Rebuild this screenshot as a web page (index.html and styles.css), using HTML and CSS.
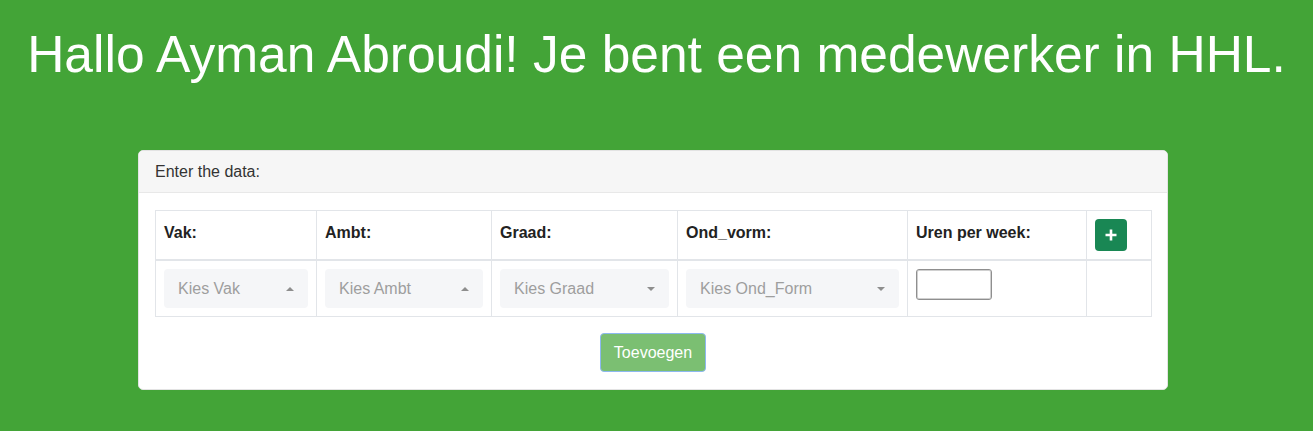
FILE: index.html
```html
<!DOCTYPE html>
<html lang="nl">
<head>
<meta charset="utf-8">
<title>HHL</title>
<link rel="stylesheet" href="styles.css">
</head>
<body>
<h1 class="welcome">Hallo Ayman Abroudi! Je bent een medewerker in HHL.</h1>
<div class="card">
  <div class="card-header">Enter the data:</div>
  <div class="card-body">
    <table class="data-table">
      <colgroup>
        <col class="c-vak"><col class="c-ambt"><col class="c-graad"><col class="c-vorm"><col class="c-uren"><col class="c-add">
      </colgroup>
      <thead>
        <tr>
          <th>Vak:</th>
          <th>Ambt:</th>
          <th>Graad:</th>
          <th>Ond_vorm:</th>
          <th>Uren per week:</th>
          <th><button class="btn-add" type="button" aria-label="Toevoegen rij"><svg width="12" height="12" viewBox="0 0 12 12"><path d="M6 0.5v11M0.5 6h11" stroke="#fff" stroke-width="2.6" fill="none"/></svg></button></th>
        </tr>
      </thead>
      <tbody>
        <tr>
          <td><div class="select"><span>Kies Vak</span><i class="caret up"></i></div></td>
          <td><div class="select"><span>Kies Ambt</span><i class="caret up"></i></div></td>
          <td><div class="select"><span>Kies Graad</span><i class="caret down"></i></div></td>
          <td><div class="select"><span>Kies Ond_Form</span><i class="caret down"></i></div></td>
          <td><input class="num" type="text"></td>
          <td></td>
        </tr>
      </tbody>
    </table>
    <div class="actions"><button class="btn-submit" type="button">Toevoegen</button></div>
  </div>
</div>
</body>
</html>
```
FILE: styles.css
```css
html, body {
  margin: 0;
  padding: 0;
}
body {
  background: #43a437;
  font-family: "Liberation Sans", Arial, sans-serif;
  color: #212529;
  height: 431px;
  overflow: hidden;
}
.welcome {
  margin: 0;
  padding-top: 24px;
  font-weight: normal;
  font-size: 51.5px;
  line-height: 60px;
  color: #fff;
  text-align: center;
}
.card {
  margin: 66px 0 0 138px;
  width: 1030px;
  box-sizing: border-box;
  background: #fff;
  border: 1px solid #e3e3e3;
  border-radius: 5px;
  overflow: hidden;
}
.card-header {
  background: #f6f6f6;
  border-bottom: 1px solid #e8e8e8;
  padding: 9px 16px 8px;
  font-size: 16px;
  line-height: 24px;
  color: #333;
}
.card-body {
  padding: 17px 16px 17px;
}
.data-table {
  width: 100%;
  table-layout: fixed;
  border-collapse: collapse;
  font-size: 16px;
}
.c-vak { width: 161px; }
.c-ambt { width: 175px; }
.c-graad { width: 186px; }
.c-vorm { width: 230px; }
.c-uren { width: 179px; }
.c-add { width: 65px; }
.data-table th,
.data-table td {
  border: 1px solid #e2e5e9;
  padding: 8px;
  text-align: left;
}
.data-table th {
  border-bottom-width: 2px;
  font-weight: bold;
  vertical-align: top;
  line-height: 22px;
  padding-top: 11px;
  color: #222;
}
.data-table th:last-child {
  padding-top: 8px;
}
.data-table td {
  vertical-align: top;
  height: 39px;
}
.btn-add {
  width: 32px;
  height: 32px;
  border: 0;
  border-radius: 4px;
  background: #198754;
  padding: 0;
  display: flex;
  align-items: center;
  justify-content: center;
}
.select {
  height: 39px;
  box-sizing: border-box;
  background: #f5f6f8;
  border-radius: 4px;
  display: flex;
  align-items: center;
  justify-content: space-between;
  padding: 0 14px 0 14px;
  color: #9e9e9e;
  font-size: 16px;
}
.caret {
  width: 0;
  height: 0;
  border-left: 4px solid transparent;
  border-right: 4px solid transparent;
}
.caret.up {
  border-bottom: 4px solid #8e8e8e;
}
.caret.down {
  border-top: 4px solid #8e8e8e;
}
.num {
  display: block;
  width: 76px;
  height: 31px;
  box-sizing: border-box;
  border: 1px solid #8f8f8f;
  box-shadow: inset 0 0 0 1px #d0d0d0;
  border-radius: 3px;
  background: #fff;
  padding: 2px 4px;
  font-size: 16px;
}
.actions {
  display: flex;
  justify-content: center;
  padding-top: 16px;
}
.btn-submit {
  height: 39px;
  box-sizing: border-box;
  padding: 0 13px;
  border: 1px solid #8db8f0;
  border-radius: 4px;
  background: #7bbf72;
  color: #fff;
  font-family: "Liberation Sans", Arial, sans-serif;
  font-size: 16px;
}
```
